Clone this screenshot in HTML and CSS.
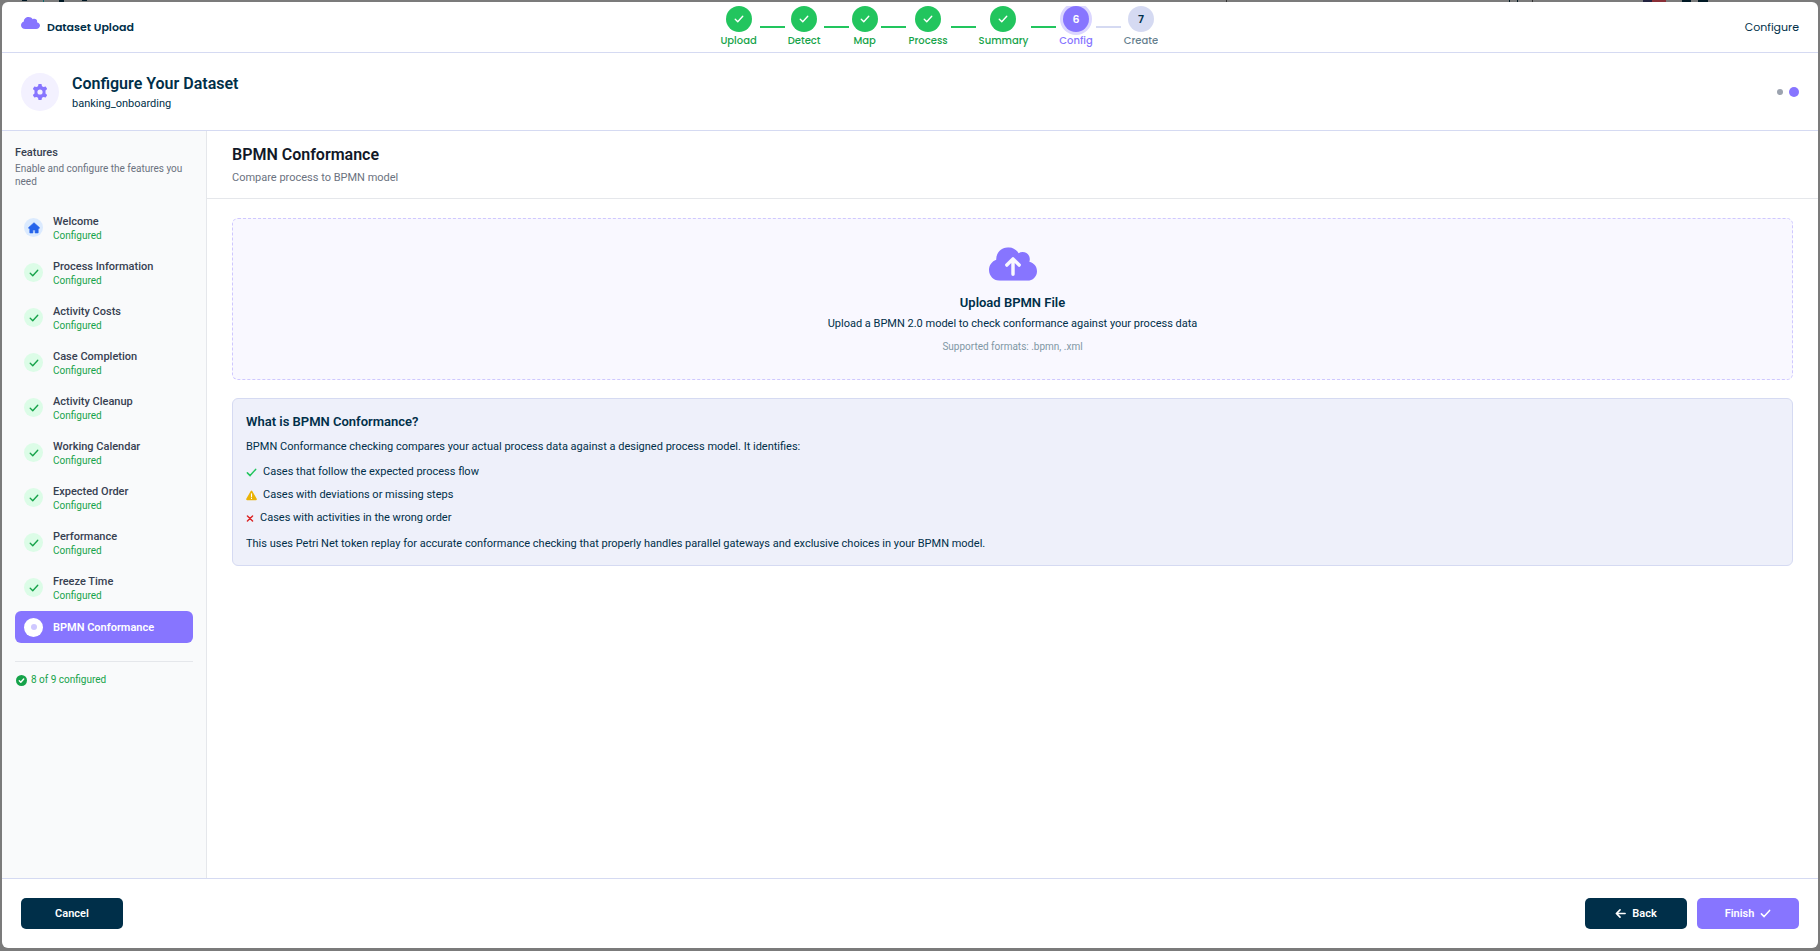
FILE: index.html
```html
<!DOCTYPE html>
<html lang="en">
<head>
  <meta charset="UTF-8">
  <meta name="viewport" content="width=device-width, initial-scale=1">
  <title>Dataset Upload</title>
  <link rel="stylesheet" href="styles.css">
</head>
<body>
  <svg class="sprite" aria-hidden="true">
    <symbol id="check" viewBox="0 0 16 16"><path d="M2 8.500 6 12.500l8-9" fill="none" stroke="currentColor" stroke-width="2.200" stroke-linecap="round" stroke-linejoin="round"/></symbol>
    <symbol id="cloud" viewBox="0 32 640 448" preserveAspectRatio="none"><path d="M0 336c0 79.500 64.500 144 144 144h368c70.700 0 128-57.300 128-128 0-61.900-44-113.600-102.400-125.400 4.100-10.700 6.400-22.400 6.400-34.600 0-53-43-96-96-96-19.700 0-38.100 6-53.300 16.200C367 64.200 315.300 32 256 32 167.600 32 96 103.600 96 192c0 2.700.1 5.400.2 8.100C40.200 219.800 0 273.200 0 336z" fill="currentColor"/></symbol>
  </svg>

  <div class="modal">
    <header class="topbar">
      <div class="brand">
        <svg class="brand-icon"><use href="#cloud"/></svg>
        <span>Dataset Upload</span>
      </div>
      <ol class="stepper">
        <li class="step done"><span class="step-dot"><svg><use href="#check"/></svg></span>Upload</li>
        <li class="line"></li>
        <li class="step done"><span class="step-dot"><svg><use href="#check"/></svg></span>Detect</li>
        <li class="line"></li>
        <li class="step done"><span class="step-dot"><svg><use href="#check"/></svg></span>Map</li>
        <li class="line"></li>
        <li class="step done"><span class="step-dot"><svg><use href="#check"/></svg></span>Process</li>
        <li class="line"></li>
        <li class="step done"><span class="step-dot"><svg><use href="#check"/></svg></span>Summary</li>
        <li class="line"></li>
        <li class="step current"><span class="step-dot">6</span>Config</li>
        <li class="line pending"></li>
        <li class="step"><span class="step-dot">7</span>Create</li>
      </ol>
      <div class="topbar-label">Configure</div>
    </header>

    <section class="title-row">
      <div class="title-icon">
        <svg viewBox="0 0 16 16"><path fill="currentColor" fill-rule="evenodd" d="M6.500 0h3l.5 2.200 1.500.9 2.200-.7 1.500 2.600-1.700 1.600v2.800l1.700 1.600-1.500 2.600-2.200-.7-1.500.9-.5 2.200h-3L6 13.800l-1.500-.9-2.200.7L.8 11l1.700-1.600V6.600L.8 5l1.500-2.600 2.200.7L6 2.200zM8 5.400a2.600 2.600 0 1 0 0 5.200 2.600 2.600 0 0 0 0-5.200z"/></svg>
      </div>
      <div class="title-text">
        <h1>Configure Your Dataset</h1>
        <p>banking_onboarding</p>
      </div>
      <div class="pager"><span></span><span class="on"></span></div>
    </section>

    <div class="body">
      <aside class="sidebar">
        <h2>Features</h2>
        <p class="hint">Enable and configure the features you need</p>
        <nav class="features">
          <a href="#" class="feature home">
            <span class="badge"><svg viewBox="0 0 16 16"><path fill="currentColor" d="M8 1 .5 7.800l.9 1L2.500 8v6.500h4v-4h3v4h4V8l1.100.8.9-1z" stroke="currentColor" stroke-width="1" stroke-linejoin="round"/></svg></span>
            <span class="feature-text">Welcome<small>Configured</small></span>
          </a>
          <a href="#" class="feature"><span class="badge"><svg><use href="#check"/></svg></span><span class="feature-text">Process Information<small>Configured</small></span></a>
          <a href="#" class="feature"><span class="badge"><svg><use href="#check"/></svg></span><span class="feature-text">Activity Costs<small>Configured</small></span></a>
          <a href="#" class="feature"><span class="badge"><svg><use href="#check"/></svg></span><span class="feature-text">Case Completion<small>Configured</small></span></a>
          <a href="#" class="feature"><span class="badge"><svg><use href="#check"/></svg></span><span class="feature-text">Activity Cleanup<small>Configured</small></span></a>
          <a href="#" class="feature"><span class="badge"><svg><use href="#check"/></svg></span><span class="feature-text">Working Calendar<small>Configured</small></span></a>
          <a href="#" class="feature"><span class="badge"><svg><use href="#check"/></svg></span><span class="feature-text">Expected Order<small>Configured</small></span></a>
          <a href="#" class="feature"><span class="badge"><svg><use href="#check"/></svg></span><span class="feature-text">Performance<small>Configured</small></span></a>
          <a href="#" class="feature"><span class="badge"><svg><use href="#check"/></svg></span><span class="feature-text">Freeze Time<small>Configured</small></span></a>
          <a href="#" class="feature active" aria-current="page"><span class="badge"><i class="dot"></i></span><span class="feature-text">BPMN Conformance</span></a>
        </nav>
        <div class="progress">
          <svg viewBox="0 0 16 16"><circle cx="8" cy="8" r="8" fill="currentColor"/><path d="m4.800 8.300 2.200 2.200 4.200-4.600" fill="none" stroke="#fff" stroke-width="2" stroke-linecap="round" stroke-linejoin="round"/></svg>
          <span>8 of 9 configured</span>
        </div>
      </aside>

      <main class="content">
        <div class="content-head">
          <h2>BPMN Conformance</h2>
          <p>Compare process to BPMN model</p>
        </div>
        <div class="content-body">
          <button type="button" class="dropzone">
            <svg class="upload-icon" viewBox="0 32 640 448"><use href="#cloud" y="32" width="640" height="448"/><path d="M320 392V196M238 270l82-82 82 82" fill="none" stroke="#f9f8ff" stroke-width="46" stroke-linecap="round" stroke-linejoin="round"/></svg>
            <span class="drop-title">Upload BPMN File</span>
            <span class="drop-text">Upload a BPMN 2.0 model to check conformance against your process data</span>
            <span class="drop-formats">Supported formats: .bpmn, .xml</span>
          </button>

          <section class="info">
            <h3>What is BPMN Conformance?</h3>
            <p>BPMN Conformance checking compares your actual process data against a designed process model. It identifies:</p>
            <ul>
              <li><svg class="ok"><use href="#check"/></svg>Cases that follow the expected process flow</li>
              <li><svg class="warn" viewBox="0 0 16 16"><path d="M8 2 1.500 13.500h13z" fill="currentColor" stroke="currentColor" stroke-width="2.500" stroke-linejoin="round"/><path d="M8 5.500v4M8 11.800v.4" stroke="#fff" stroke-width="1.600" stroke-linecap="round"/></svg>Cases with deviations or missing steps</li>
              <li><svg class="bad" viewBox="0 0 8 12"><path d="m1.200 3.200 5.600 5.600m0-5.600L1.200 8.800" stroke="currentColor" stroke-width="1.600" stroke-linecap="round"/></svg>Cases with activities in the wrong order</li>
            </ul>
            <p>This uses Petri Net token replay for accurate conformance checking that properly handles parallel gateways and exclusive choices in your BPMN model.</p>
          </section>
        </div>
      </main>
    </div>

    <footer class="actions">
      <button type="button" class="btn dark cancel">Cancel</button>
      <button type="button" class="btn dark"><svg viewBox="0 0 12 12"><path d="M11 6H1.500M5.500 2l-4 4 4 4" fill="none" stroke="currentColor" stroke-width="1.800" stroke-linecap="round" stroke-linejoin="round"/></svg>Back</button>
      <button type="button" class="btn primary">Finish<svg><use href="#check"/></svg></button>
    </footer>
  </div>
</body>
</html>
```
FILE: styles.css
```css
* {
  box-sizing: border-box;
}
body {
  margin: 0;
  height: 100vh;
  padding: 2px 2px 3px;
  /* bits of the dimmed page that show above the modal */
  background:
    linear-gradient(#001824, #001824) 22px 0 / 5px 1px no-repeat,
    linear-gradient(#0d6a70, #0d6a70) 43px 0 / 1px 2px no-repeat,
    linear-gradient(#001824, #001824) 59px 0 / 5px 2px no-repeat,
    linear-gradient(#001824, #001824) 82px 0 / 5px 1px no-repeat,
    linear-gradient(#333, #333) 1226px 0 / 1px 2px no-repeat,
    linear-gradient(#001824, #001824) 1509px 0 / 1px 2px no-repeat,
    linear-gradient(#001824, #001824) 1517px 0 / 1px 2px no-repeat,
    linear-gradient(#333, #333) 1532px 0 / 1px 2px no-repeat,
    linear-gradient(90deg, #23233f 9px, #8a3038 9px) 1643px 0 / 23px 2px no-repeat,
    linear-gradient(#001824, #001824) 1682px 0 / 9px 2px no-repeat,
    linear-gradient(#001824, #001824) 1698px 0 / 10px 2px no-repeat,
    #7b7b7b;
  font-family: Roboto, sans-serif;
  font-size: 11px;
  line-height: 16px;
  color: #002f49;
}
h1, h2, h3, p, ul, ol {
  margin: 0;
  padding: 0;
}
ul, ol {
  list-style: none;
}
.sprite {
  display: none;
}
.modal {
  height: 100%;
  display: flex;
  flex-direction: column;
  background: #fff;
  border-radius: 6px;
  overflow: hidden;
}

/* top bar */
.topbar {
  display: flex;
  justify-content: space-between;
  align-items: center;
  height: 51px;
  padding: 0 19px;
  border-bottom: 1px solid #d5daf2;
  font-family: Poppins, Inter, sans-serif;
}
.brand {
  display: flex;
  gap: 7px;
  line-height: 20px;
  font-weight: 600;
}
.brand-icon {
  width: 19px;
  height: 12px;
  color: #8775ff;
}
.stepper {
  display: flex;
  align-items: center;
  gap: 3px;
  overflow: hidden;
}
.step {
  display: flex;
  flex-direction: column;
  align-items: center;
  gap: 1px;
  font-size: 10px;
  font-weight: 500;
  color: #667f8e;
}
.step-dot {
  display: flex;
  align-items: center;
  justify-content: center;
  width: 26px;
  height: 26px;
  border-radius: 50%;
  background: #d5daf2;
  color: #002f49;
  font-size: 11px;
  font-weight: 600;
}
.step-dot svg {
  width: 10px;
  height: 10px;
}
.step.done {
  color: #16a34a;
}
.step.done .step-dot {
  background: #22c55e;
  color: #fff;
}
.step.current {
  color: #8775ff;
}
.step.current .step-dot {
  background: #8775ff;
  color: #fff;
  box-shadow: 0 0 0 3px #dbd6ff;
}
.line {
  width: 25px;
  height: 2px;
  background: #22c55e;
}
.line.pending {
  background: #d5daf2;
}

/* dataset title */
.title-row {
  display: flex;
  align-items: center;
  gap: 13px;
  height: 78px;
  padding: 0 19px;
  border-bottom: 1px solid #d5daf2;
}
.title-icon {
  display: flex;
  align-items: center;
  justify-content: center;
  width: 38px;
  height: 38px;
  border-radius: 50%;
  background: #f3f1ff;
  color: #8775ff;
}
.title-icon svg {
  width: 16px;
  height: 16px;
}
.title-text {
  flex: 1;
}
h1 {
  font-size: 16px;
  line-height: 24px;
  font-weight: 600;
}
.pager {
  display: flex;
  align-items: center;
  gap: 6px;
}
.pager span {
  width: 6px;
  height: 6px;
  border-radius: 50%;
  background: #9ca3af;
}
.pager .on {
  width: 10px;
  height: 10px;
  background: #8775ff;
}

/* sidebar */
.body {
  flex: 1;
  display: flex;
  min-height: 0;
}
.sidebar {
  width: 205px;
  flex-shrink: 0;
  padding: 14px 13px;
  background: #f9fafb;
  border-right: 1px solid #e5e7eb;
}
.sidebar h2 {
  font-size: 11px;
  font-weight: 500;
  color: #374151;
}
.hint {
  margin-top: 1px;
  font-size: 10px;
  line-height: 13px;
  color: #6b7280;
}
.features {
  display: flex;
  flex-direction: column;
  gap: 2px;
  margin-top: 18px;
}
.feature {
  display: flex;
  align-items: center;
  gap: 10px;
  height: 43px;
  padding: 0 9px;
  border-radius: 6px;
  color: #374151;
  font-weight: 500;
  text-decoration: none;
}
.feature-text {
  padding-top: 2px;
  line-height: 14px;
}
.feature small {
  display: block;
  font-size: 10px;
  line-height: 13px;
  font-weight: 400;
  color: #16a34a;
}
.badge {
  display: flex;
  align-items: center;
  justify-content: center;
  width: 19px;
  height: 19px;
  border-radius: 50%;
  background: #dcfce7;
  color: #16a34a;
}
.badge svg {
  width: 10px;
  height: 10px;
}
.home .badge {
  background: #dbeafe;
  color: #2563eb;
}
.home .badge svg {
  width: 12px;
  height: 12px;
}
.feature.active {
  height: 32px;
  background: #8775ff;
  color: #fff;
  font-weight: 600;
}
.active .badge {
  background: #fff;
}
.dot {
  width: 6px;
  height: 6px;
  border-radius: 50%;
  background: #cfc8ff;
}
.progress {
  display: flex;
  align-items: center;
  gap: 4px;
  margin-top: 18px;
  padding: 10px 1px;
  border-top: 1px solid #e5e7eb;
  font-size: 10px;
  color: #16a34a;
}
.progress svg {
  width: 11px;
  height: 11px;
}

/* content */
.content {
  flex: 1;
}
.content-head {
  height: 68px;
  padding: 13px 25px;
  border-bottom: 1px solid #e5e7eb;
  color: #6b7280;
}
.content-head h2 {
  font-size: 16px;
  line-height: 22px;
  font-weight: 600;
  color: #111827;
}
.content-head p {
  margin-top: 4px;
}
.content-body {
  display: flex;
  flex-direction: column;
  gap: 18px;
  padding: 19px 25px;
}
.dropzone {
  display: flex;
  flex-direction: column;
  align-items: center;
  padding: 28px 28px 25px;
  border: 1px dashed #cfc8ff;
  border-radius: 6px;
  background: #f9f8ff;
  color: #002f49;
  font: inherit;
}
.upload-icon {
  width: 48px;
  height: 34px;
  color: #8775ff;
}
.drop-title {
  margin-top: 13px;
  font-size: 13px;
  line-height: 18px;
  font-weight: 600;
}
.drop-text {
  margin-top: 4px;
}
.drop-formats {
  margin-top: 8px;
  font-size: 10px;
  line-height: 14px;
  color: #8097a4;
}
.info {
  padding: 14px 13px 13px;
  border: 1px solid #d5daf2;
  border-radius: 6px;
  background: #eef0fa;
}
.info h3 {
  margin-bottom: 8px;
  font-size: 13px;
  line-height: 18px;
  font-weight: 600;
}
.info ul {
  display: flex;
  flex-direction: column;
  gap: 7px;
  margin: 9px 0 10px;
}
.info li {
  display: flex;
  align-items: center;
  gap: 6px;
}
.info li svg {
  width: 11px;
  height: 11px;
}
.info .ok {
  color: #22c55e;
}
.info .warn {
  color: #eab308;
}
.info li .bad {
  width: 8px;
  color: #dc2626;
}

/* footer */
.actions {
  display: flex;
  gap: 10px;
  padding: 19px;
  border-top: 1px solid #d5daf2;
}
.btn {
  display: flex;
  align-items: center;
  justify-content: center;
  gap: 6px;
  width: 102px;
  height: 31px;
  border: 0;
  border-radius: 5px;
  font: inherit;
  font-weight: 600;
  color: #fff;
}
.btn svg {
  width: 11px;
  height: 11px;
}
.dark {
  background: #002f49;
}
.primary {
  background: #8775ff;
}
.cancel {
  margin-right: auto;
}
```
